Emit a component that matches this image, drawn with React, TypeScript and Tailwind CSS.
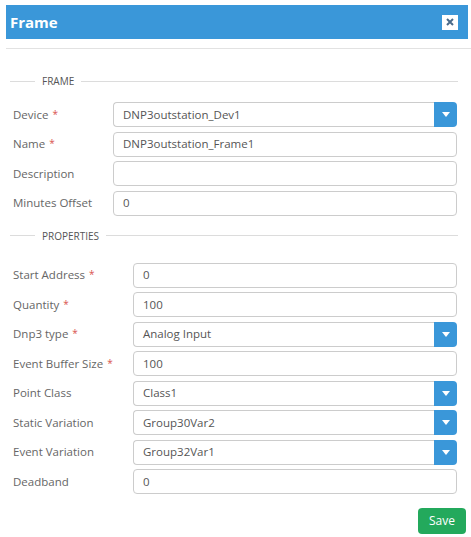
const FONT = { fontFamily: '"Open Sans", "Noto Sans", sans-serif' };

const Req = () => <span className="ml-[4px] text-[#d9534f] text-[10px] relative -top-[1px]">*</span>;

const Caret = () => (
  <svg width="8" height="5" viewBox="0 0 8 5" aria-hidden="true">
    <path d="M0 0h8L4 5z" fill="#ffffff" />
  </svg>
);

const Legend = ({ title }: { title: string }) => (
  <div className="flex items-center h-[12px]">
    <div className="w-[25px] border-t border-[#dcdcdc]" />
    <span className="px-[7px] text-[10px] text-[#555] leading-none">{title}</span>
    <div className="flex-1 border-t border-[#dcdcdc]" />
  </div>
);

interface RowProps {
  label: string;
  value?: string;
  required?: boolean;
  select?: boolean;
  labelWidth: string;
}

const Row = ({ label, value = '', required, select, labelWidth }: RowProps) => (
  <div className="flex items-center h-[25px]">
    <div className={`${labelWidth} pl-[3px] text-[11.5px] text-[#666] whitespace-nowrap`}>
      {label}
      {required && <Req />}
    </div>
    <div className="flex-1 flex h-[25px]">
      <div
        className={`flex-1 flex items-center border border-[#cccccc] bg-white px-[9px] text-[11.5px] text-[#555] ${
          select ? 'rounded-l-[4px] border-r-0' : 'rounded-[4px]'
        }`}
      >
        {value}
      </div>
      {select && (
        <div className="w-[23px] bg-[#3a97d9] rounded-r-[4px] flex items-center justify-center">
          <Caret />
        </div>
      )}
    </div>
  </div>
);

export default function App() {
  return (
    <div className="w-[471px] h-[537px] bg-white pl-[6px] pt-[5px] overflow-hidden" style={FONT}>
      <div className="w-[462px] h-[34px] bg-[#3a97d9] flex items-center justify-between pl-[4px] pr-[10px]">
        <span className="text-white font-bold text-[15px]">Frame</span>
        <div className="w-[16px] h-[15px] bg-white flex items-center justify-center">
          <svg width="8" height="8" viewBox="0 0 8 8" aria-hidden="true">
            <path d="M1 1L7 7M7 1L1 7" stroke="#4a6a8a" strokeWidth="2" />
          </svg>
        </div>
      </div>
      <div className="mt-[9px] border-t border-[#e2e2e2]" />

      <div className="pl-[4px] pr-[13px]">
        <div className="mt-[26px]">
          <Legend title="FRAME" />
        </div>
        <div className="mt-[15px] mr-[1px] flex flex-col gap-[4.5px]">
          <Row label="Device" required select value="DNP3outstation_Dev1" labelWidth="w-[103px]" />
          <Row label="Name" required value="DNP3outstation_Frame1" labelWidth="w-[103px]" />
          <Row label="Description" labelWidth="w-[103px]" />
          <Row label="Minutes Offset" value="0" labelWidth="w-[103px]" />
        </div>

        <div className="mt-[14px]">
          <Legend title="PROPERTIES" />
        </div>
        <div className="mt-[21px] mr-[1px] flex flex-col gap-[4.5px]">
          <Row label="Start Address" required value="0" labelWidth="w-[123px]" />
          <Row label="Quantity" required value="100" labelWidth="w-[123px]" />
          <Row label="Dnp3 type" required select value="Analog Input" labelWidth="w-[123px]" />
          <Row label="Event Buffer Size" required value="100" labelWidth="w-[123px]" />
          <Row label="Point Class" select value="Class1" labelWidth="w-[123px]" />
          <Row label="Static Variation" select value="Group30Var2" labelWidth="w-[123px]" />
          <Row label="Event Variation" select value="Group32Var1" labelWidth="w-[123px]" />
          <Row label="Deadband" value="0" labelWidth="w-[123px]" />
        </div>

        <div className="flex justify-end mt-[14px]">
          <button className="w-[48px] h-[26px] rounded-[4px] bg-[#23a95c] text-white text-[12px] -mr-[8px]">
            Save
          </button>
        </div>
      </div>
    </div>
  );
}
